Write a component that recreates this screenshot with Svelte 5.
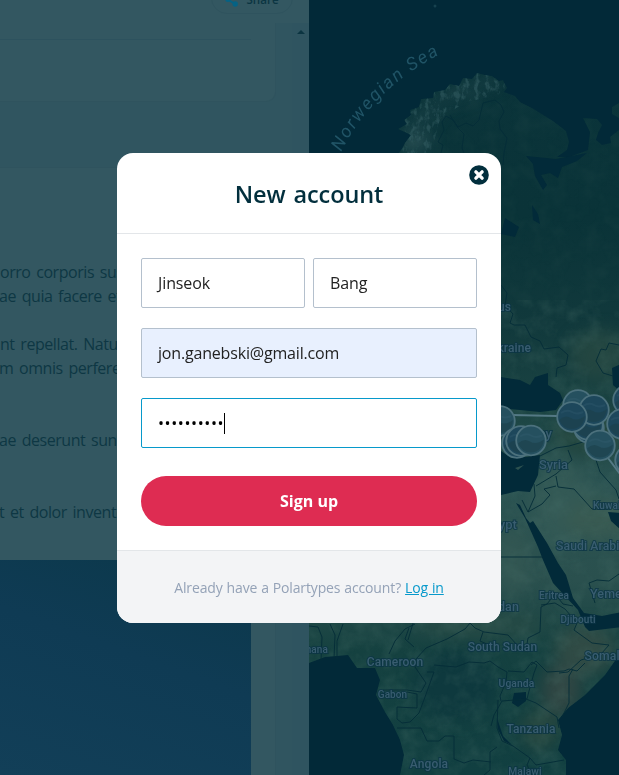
<script>
  const paragraphs = [
    ['orro corporis suscipit', 'ae quia facere et'],
    ['nt repellat. Natus', 'm omnis perferendis'],
    ['\u00a0', 'ae deserunt sunt'],
    ['\u00a0', 't et dolor inventore']
  ];

  const labels = [
    { t: 'Belarus', x: 511, y: 311, s: 12, a: 'end' },
    { t: 'Ukraine', x: 531, y: 352, s: 12, a: 'end' },
    { t: 'Turkey', x: 552, y: 438, s: 13, a: 'end' },
    { t: 'Syria', x: 553.5, y: 469, s: 12.8 },
    { t: 'Kuwait', x: 593, y: 509, s: 10, a: 'start' },
    { t: 'Egypt', x: 517, y: 529, s: 13, a: 'end' },
    { t: 'Saudi Arabia', x: 556, y: 549.5, s: 12.2, a: 'start' },
    { t: 'Eritrea', x: 554, y: 598.5, s: 10 },
    { t: 'Yemen', x: 590, y: 598, s: 12.5, a: 'start' },
    { t: 'Sudan', x: 519, y: 610.5, s: 12.5, a: 'end' },
    { t: 'Djibouti', x: 578, y: 623, s: 10 },
    { t: 'Somalia', x: 584.5, y: 659.5, s: 12.2, a: 'start' },
    { t: 'South Sudan', x: 502.5, y: 650.5, s: 12 },
    { t: 'Cameroon', x: 395, y: 665.5, s: 12 },
    { t: 'Ghana', x: 328, y: 653, s: 10, a: 'end' },
    { t: 'Uganda', x: 516.5, y: 687, s: 10.3 },
    { t: 'Gabon', x: 392.5, y: 698, s: 10 },
    { t: 'Tanzania', x: 531, y: 732.5, s: 12 },
    { t: 'Angola', x: 429, y: 768, s: 12 },
    { t: 'Malawi', x: 525, y: 775, s: 10.3 }
  ];

  const markers = [
    [500, 421], [517, 443], [521, 441], [531, 440.5],
    [628, 400], [622, 424], [630, 460],
    [589, 428], [588, 425], [578, 405], [594, 410], [572, 417], [600, 445.5]
  ];

  const borders = [
    'M441 153l2-8-5-3 6-12-2-8 4-6 7 4 5 7 8-4 7 3 6-6 4-17 12-3 6 5 3 7-5 9 1 8 7 9-3 15-1 12',
    'M450 115l8 13 6 6-2 14 3 8',
    'M501 285l6 8-2 12 8 9-3 9 4 2h11l6 12 9 4 4 8 15-2 9 8-2 10-9 3-1 9',
    'M619 345l-10-2-3 7-5-1-5 12 7 12 10 3',
    'M540 456l16-8 13-2 14-4 14-2 4-12M568 450l4 10-16 14-20 12M556 476l2 11 16 2 18 20h18M596 460l4 12 16 18 3 9',
    'M534 484l1 12-7 16-6-12M528 512l14-8 8-9-6-6 12-3',
    'M501 557h42M541 607l6-3 8-10 8 10 10 2M595 603l-6-20 8-3 12 1 10-7',
    'M541 607l-1 25-12 6M541 605l14-2 10 6 12 14-3 7 18 13 17 2-8 9-20 6-13 12-9 1',
    'M528 638l-2 12-8-4-10-11-24-3-9-4-5-5-5 6-18 10-21 9-10 11-1 8 11 16-5 9-14-2h-24v7M408 640l6-20M414 647l-9-8 4-11',
    'M427 672h7l-9 25-6 16-9 9-8 1-5-4v-12l20 1v-14l-10-2M397 728h24l6 13h12l6-5h9v23l10 4 9-3 18 2',
    'M434 665l22 2 13-5 15 1 6-2 8 6 9 5-1 10-6 14 1 5M489 645l-9-4 3-9M508 671l16 1 8-10 5 3-3 8-5 18-2 8-25 2-8 14-3 11M531 665l5-4 11 11 17-1 5-2 8 2 8-8M573 669l-4 7v27l-7 14M526 699l10 4 21 14 2 11M498 700l-1 28 5 13 11 5 17 12 6 7 28-5M497 747l-7 5v18l-6 5M530 758l-3 7 5 10',
    'M309 626l9 1 4 10-1 24M330 624l5 11-1 24M343 624l-6 17v18M389 654l6-13 10-12 10-5'
  ];

  const dots = '•'.repeat(10);
</script>

<main>
  <section class="article">
    <div class="toolbar">
      <div class="share">
        <svg width="13" height="14" viewBox="0 0 13 14"><path d="M10.5 2.5 2.8 6.5 10 11" fill="none" stroke="#056284" stroke-width="1.9" /><circle cx="10" cy="2.5" r="2.5" /><circle cx="2.8" cy="6.5" r="2.6" /><circle cx="10.2" cy="11" r="2.7" /></svg>
        <span>Share</span>
      </div>
    </div>
    <div class="scroller">
      <div class="feed">
        <div class="card first"><hr /></div>
        <div class="card post">
          <div class="copy">
            {#each paragraphs as lines}
              <p>{#each lines as line}<span>{line}</span>{/each}</p>
            {/each}
          </div>
          <div class="photo"></div>
        </div>
      </div>
      <div class="track"><i></i></div>
    </div>
  </section>

  <svg class="map" width="310" height="775" viewBox="309 0 310 775" color-interpolation-filters="sRGB">
    <defs>
      <linearGradient id="land" gradientUnits="userSpaceOnUse" x1="0" y1="0" x2="0" y2="775">
        <stop offset="0" stop-color="#0b343b" />
        <stop offset=".28" stop-color="#0a3338" />
        <stop offset=".42" stop-color="#11393c" />
        <stop offset=".53" stop-color="#1b4443" />
        <stop offset=".62" stop-color="#2b5352" />
        <stop offset=".75" stop-color="#2a504e" />
        <stop offset=".84" stop-color="#154140" />
        <stop offset="1" stop-color="#113f41" />
      </linearGradient>
      <filter id="soft" x="-50%" y="-50%" width="200%" height="200%"><feGaussianBlur stdDeviation="8" /></filter>
      <filter id="edge"><feGaussianBlur stdDeviation=".7" /></filter>
      <filter id="grain" x="0" y="0" width="100%" height="100%">
        <feTurbulence type="fractalNoise" baseFrequency=".06" numOctaves="5" seed="8" />
        <feColorMatrix values="0 0 0 0 .3  0 0 0 0 .45  0 0 0 0 .42  2 0 0 0 -.75" />
      </filter>
      <filter id="peaks" x="0" y="0" width="100%" height="100%">
        <feTurbulence type="fractalNoise" baseFrequency=".2 .12" numOctaves="4" seed="3" result="n" />
        <feColorMatrix in="n" values="0 0 0 0 .2  0 0 0 0 .36  0 0 0 0 .38  4 0 0 0 -1.9" result="c" />
        <feComposite in="c" in2="SourceAlpha" operator="in" />
      </filter>
      <clipPath id="ground">
        <path d="M396 156L402 149 405 143 411 135 405 132 398 129 407 124 404 120 411 115 410 110 419 107 421 99 433 98 434 92 445 90 450 84 459 86 463 78 472 79 477 73 485 75 492 76 499 81 503 80 507 88 504 92 515 96 520 102 532 108 540 113 553 121 566 131 569 142 567 150 557 157H569L580 153 588 150 590 132 583 118 597 119 602 125 598 133 596 140 602 145 611 143 610 137 619 130V655L605 675 585 695 568 708 558 720 562 735 558 750 566 760V775H400L404 755 400 740 393 725 385 712 376 695 380 680 375 668H357L348 655 325 657 309 663V610H396z" />
        <path d="M619 103L612 107 612 114 619 118z" />
      </clipPath>
      <path id="seaArc" d="M341 152Q374 86 450 49" />
    </defs>
    <rect x="309" width="310" height="775" fill="#022938" />
    <g clip-path="url(#ground)">
      <rect x="309" width="310" height="775" fill="url(#land)" />
      <g filter="url(#soft)">
        <ellipse cx="415" cy="142" rx="15" ry="9" fill="#2b5055" />
        <path d="M400 135l20-28 50-30 32 4-22 12-40 14-20 34z" fill="#1d4348" opacity=".6" />
        <ellipse cx="600" cy="355" rx="30" ry="25" fill="#234641" />
        <ellipse cx="562" cy="505" rx="30" ry="42" fill="#335955" />
        <ellipse cx="600" cy="520" rx="35" ry="20" fill="#385a52" />
        <ellipse cx="512" cy="560" rx="18" ry="35" fill="#325652" />
        <ellipse cx="480" cy="625" rx="65" ry="12" fill="#264a45" />
        <ellipse cx="455" cy="685" rx="42" ry="35" fill="#0e393e" />
        <ellipse cx="585" cy="650" rx="30" ry="25" fill="#304b45" />
        <ellipse cx="561" cy="690" rx="20" ry="26" fill="#304643" />
        <ellipse cx="540" cy="730" rx="20" ry="20" fill="#25463f" />
        <ellipse cx="590" cy="435" rx="36" ry="20" fill="#22453e" />
      </g>
      <rect x="309" y="300" width="310" height="475" filter="url(#grain)" opacity=".26" />
      <rect x="309" width="310" height="300" filter="url(#grain)" opacity=".08" />
      <path d="M396 156l10-40 30-25 40-20 30 10-2 12-40 10-24 16-10 37z" filter="url(#peaks)" opacity=".6" />
    </g>
    <circle cx="435" cy="6" r="1.5" fill="#17424f" />
    <g fill="#022a39" filter="url(#edge)">
      <path d="M526 156l30 3 31-6-10 8-15 6-4 11-8-5-9 2 6 10-4 5-8-14-2-12z" />
      <path d="M532 205l6 9 2 10-7-4zM505 218l14 9-4 10-14-3z" />
      <path d="M501 377l19 3 10 5 5-8 13-4v12l12 8 3 7-7 10-16 2-20-2-19-2z" />
      <path d="M612 368l9-4v28l-8-7z" />
      <path d="M501 451l10 7 14-1 15-2-2 20-8 17-12-1-17 4z" />
      <path d="M516 503L525 518 538 547 543 560 553 583 578 610 585 627 589 631 622 627V612L602 616 584 613 573 598 566 575 558 563 547 543 533 521 530 523 526 518 520 505z" />
      <path d="M608 512l13 1v17l-10-9z" />
      <path d="M514 693l12-1v9l-8 6-6-4zM497 718l6 18 9 9-8-4-6-12z" />
    </g>
    <path d="M515 468l9-3-6 5z" fill="#2c514f" />
    <g fill="none" stroke="#042c38" stroke-width=".9" stroke-linejoin="round">
      {#each borders as d}<path {d} />{/each}
    </g>
    <text class="sea"><textPath href="#seaArc">Norwegian Sea</textPath></text>
    {#each labels as l}
      <text class="place" x={l.x} y={l.y} font-size={l.s} text-anchor={l.a ?? 'middle'}>{l.t}</text>
    {/each}
    <path d="M512 415l45 1M608 458l12 16" stroke="#547985" stroke-width="2" fill="none" />
    {#each markers as [cx, cy], i}
      <g>
        <circle {cx} {cy} r="14.8" fill={i % 3 ? '#1d475b' : '#25505f'} stroke="#4c717d" stroke-width="1.8" />
        <path d="M{cx - 13} {cy + 3}q6-6 12-2t14-2q-1 9-8 12-12 4-18-8z" fill="#1c414b" opacity=".65" />
        <path d="M{cx - 11} {cy - 4}q6-4 11-1t11 0" fill="none" stroke="#3b6576" stroke-width="2" opacity=".25" />
      </g>
    {/each}
  </svg>

  <div class="overlay">
    <div class="modal">
      <header>
        <h1>New account</h1>
        <button class="close" aria-label="Close">
          <svg width="20" height="20" viewBox="0 0 20 20"><circle cx="10" cy="10" r="9.8" fill="#022f3d" /><path d="M6.9 6.9l6.2 6.2M13.1 6.9l-6.2 6.2" stroke="#fff" stroke-width="3.4" stroke-linecap="round" /></svg>
        </button>
      </header>
      <form>
        <div class="names">
          <div class="field">Jinseok</div>
          <div class="field">Bang</div>
        </div>
        <div class="field filled">jon.ganebski@gmail.com</div>
        <div class="field focus"><span class="dots">{dots}</span><i class="caret"></i></div>
        <button class="submit" type="button">Sign up</button>
      </form>
      <footer><span>Already have a Polartypes account?</span><a href="#login">Log in</a></footer>
    </div>
  </div>
</main>

<style>
  main {
    position: relative;
    display: flex;
    width: 619px;
    height: 775px;
    overflow: hidden;
    font-family: 'Open Sans', 'Noto Sans', sans-serif;
  }
  .article {
    width: 309px;
    height: 775px;
    display: flex;
    flex-direction: column;
    background: #335761;
    overflow: hidden;
  }
  .toolbar {
    height: 23px;
    flex: none;
    display: flex;
    justify-content: flex-end;
    align-items: flex-end;
    padding-right: 16px;
  }
  .share {
    box-sizing: border-box;
    width: 82px;
    height: 32px;
    margin-bottom: 9px;
    border: 1px solid #2f535e;
    border-radius: 16px;
    display: flex;
    align-items: center;
    justify-content: center;
    gap: 8px;
    padding-top: 3px;
    font-size: 11.6px;
    font-weight: 600;
    color: #0b3542;
  }
  .share svg { fill: #056284; }
  .scroller {
    flex: 1;
    min-height: 0;
    display: flex;
    background: #305560;
  }
  .feed { width: 292px; }
  .card {
    box-sizing: border-box;
    width: 276px;
    background: #335761;
    border-right: 1px solid #2f535e;
  }
  .first {
    height: 79px;
    border-bottom: 1px solid #2f535e;
    border-bottom-right-radius: 10px;
    padding-top: 16px;
  }
  hr {
    margin: 0;
    width: 251px;
    border: 0;
    border-top: 1px solid #2d525e;
  }
  .post {
    margin-top: 65px;
    height: 608px;
    padding-top: 92px;
    border-top: 1px solid #2f535e;
  }
  .copy {
    height: 300px;
    color: #0e3744;
    font-size: 16px;
    letter-spacing: -.45px;
    line-height: 24px;
    white-space: nowrap;
    word-spacing: 2px;
  }
  p { margin: 0 0 24px; }
  p span { display: block; }
  p span + span { margin-left: -1px; }
  .photo {
    width: 251px;
    height: 215px;
    background: linear-gradient(200deg, #0b384a, #0f3b54 45%, #123f58);
  }
  .track {
    width: 17px;
    background: #2f5460;
    display: flex;
    justify-content: center;
    padding-top: 7px;
  }
  .track i {
    width: 0;
    height: 0;
    border: 4px solid transparent;
    border-top: 0;
    border-bottom-color: #0b3441;
  }
  .map { display: block; flex: none; }
  .sea {
    font: italic 18px Roboto, sans-serif;
    letter-spacing: 1.9px;
    fill: #205466;
  }
  .place {
    font-family: Roboto, sans-serif;
    font-weight: 500;
    letter-spacing: .1px;
    fill: #395d70;
    stroke: #0b3446;
    stroke-width: 2px;
    stroke-opacity: .75;
    paint-order: stroke;
  }
  .overlay {
    position: absolute;
    inset: 0;
    display: flex;
    justify-content: center;
    align-items: flex-start;
    padding: 153px 1px 0 0;
  }
  .modal {
    width: 384px;
    height: 470px;
    border-radius: 16px;
    background: #fff;
    overflow: hidden;
    display: flex;
    flex-direction: column;
  }
  header {
    position: relative;
    box-sizing: border-box;
    height: 81px;
    border-bottom: 1px solid #e3e6e9;
    display: flex;
    align-items: center;
    justify-content: center;
  }
  h1 {
    margin: 2px 0 0;
    font-size: 23.5px;
    font-weight: 650;
    line-height: 36px;
    letter-spacing: -.1px;
    color: #022f3d;
    word-spacing: 2px;
    white-space: nowrap;
  }
  .close {
    position: absolute;
    top: 12px;
    right: 12px;
    width: 20px;
    height: 20px;
    padding: 0;
    border: 0;
    background: none;
  }
  .close svg { display: block; }
  form {
    padding: 24px 24px 0;
    height: 316px;
    box-sizing: border-box;
    display: flex;
    flex-direction: column;
    gap: 20px;
  }
  .names { display: flex; gap: 8px; }
  .names .field { flex: 1; letter-spacing: -.1px; }
  .field {
    box-sizing: border-box;
    height: 50px;
    flex: none;
    display: flex;
    align-items: center;
    padding: 0 16px;
    border: 1px solid #b4c0cd;
    border-radius: 2px;
    font-size: 16px;
    letter-spacing: -.18px;
    color: #222;
    white-space: nowrap;
  }
  .filled { background: #e8f0fe; }
  .focus { border-color: #0799cb; }
  .dots { letter-spacing: .6px; color: #000; }
  .caret { width: 1px; height: 21px; background: #000; }
  .submit {
    height: 50px;
    margin-top: 8px;
    border: 0;
    border-radius: 25px;
    background: #de2c52;
    color: #fff;
    font: 700 16px 'Open Sans', sans-serif;
  }
  footer {
    box-sizing: border-box;
    flex: 1;
    border-top: 1px solid #e3e6e9;
    background: #f3f4f6;
    display: flex;
    align-items: center;
    justify-content: center;
    gap: 4px;
    padding-top: 1px;
    font-size: 14px;
    letter-spacing: -.13px;
    word-spacing: .4px;
    color: #94a2b7;
    white-space: nowrap;
  }
  a { color: #0799cb; }
</style>
